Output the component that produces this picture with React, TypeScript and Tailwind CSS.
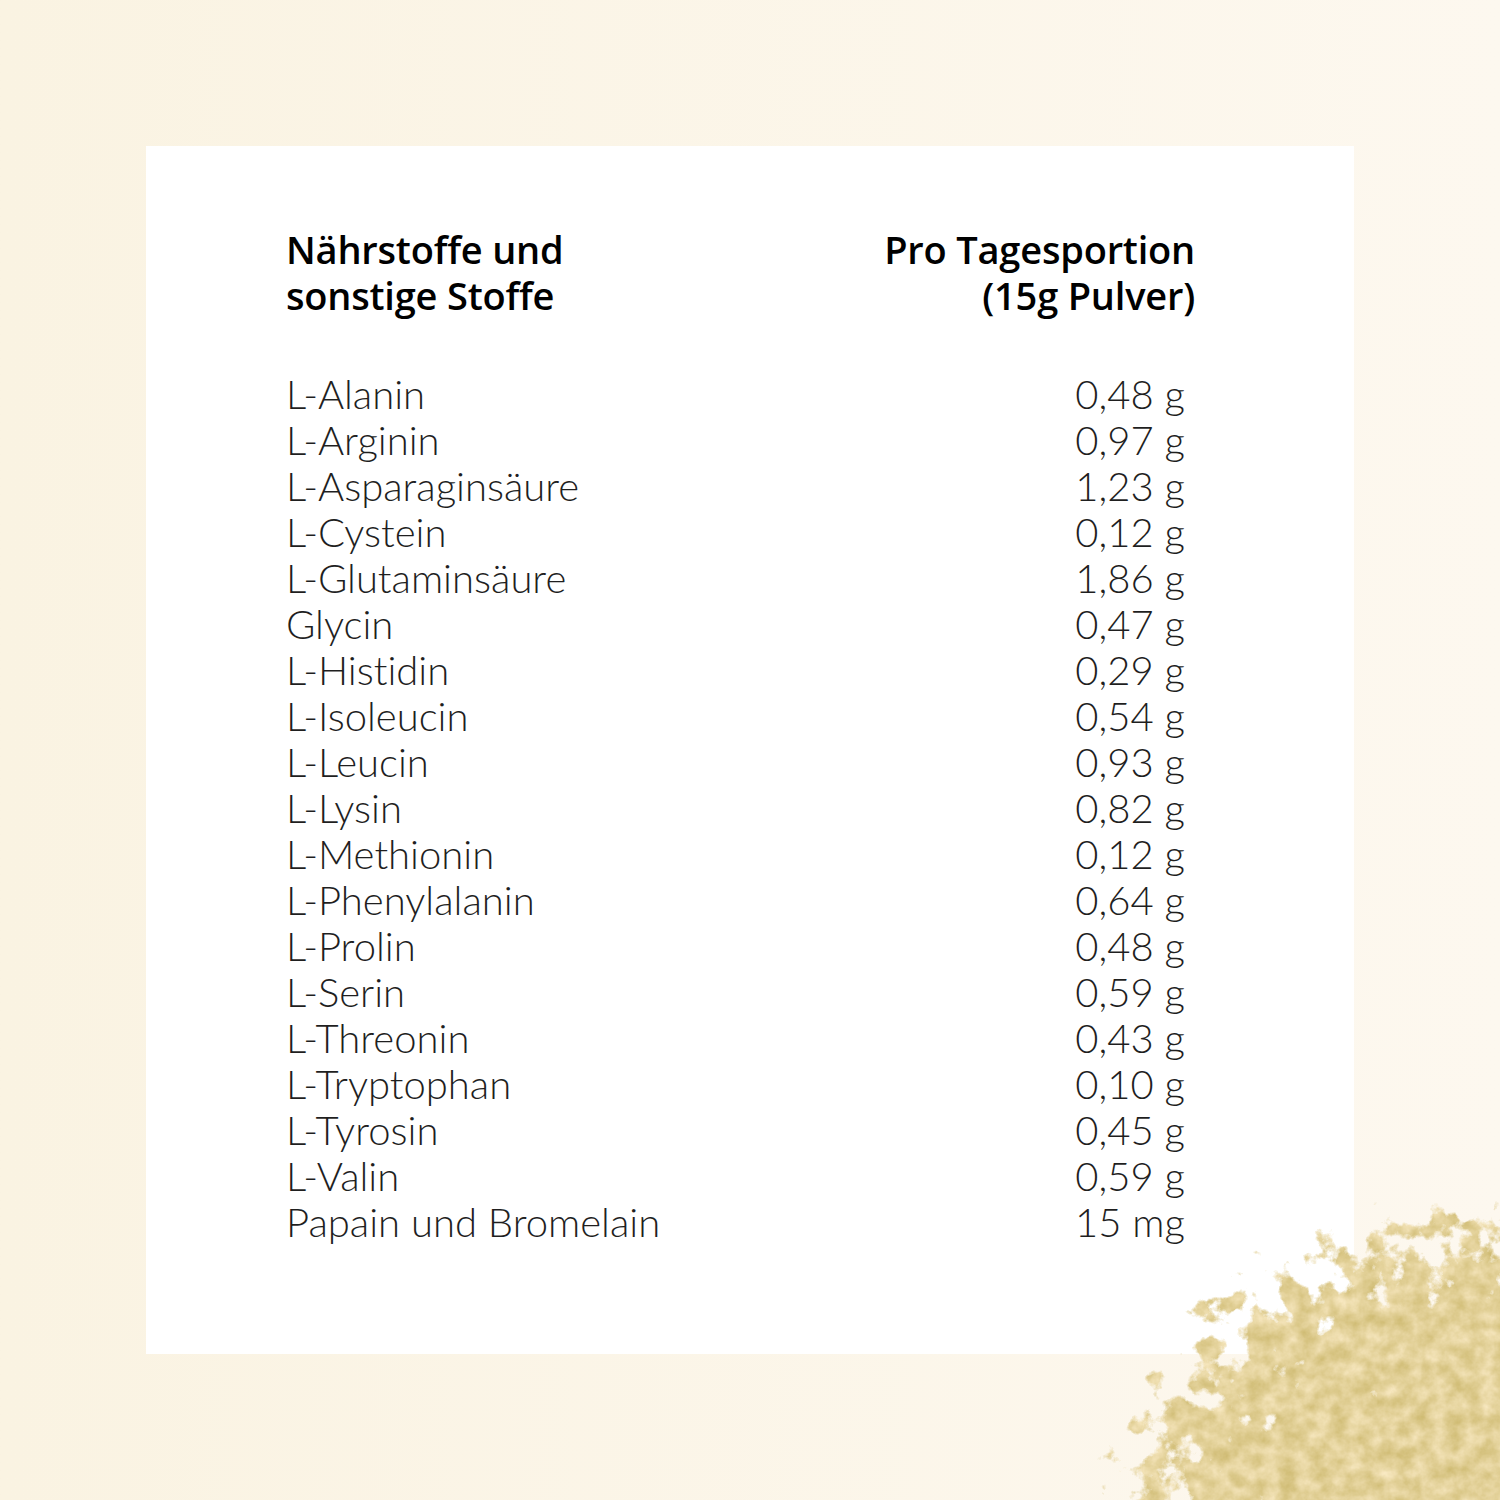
import React from 'react';

const ROWS: [string, string][] = [
  ['L-Alanin', '0,48 g'],
  ['L-Arginin', '0,97 g'],
  ['L-Asparaginsäure', '1,23 g'],
  ['L-Cystein', '0,12 g'],
  ['L-Glutaminsäure', '1,86 g'],
  ['Glycin', '0,47 g'],
  ['L-Histidin', '0,29 g'],
  ['L-Isoleucin', '0,54 g'],
  ['L-Leucin', '0,93 g'],
  ['L-Lysin', '0,82 g'],
  ['L-Methionin', '0,12 g'],
  ['L-Phenylalanin', '0,64 g'],
  ['L-Prolin', '0,48 g'],
  ['L-Serin', '0,59 g'],
  ['L-Threonin', '0,43 g'],
  ['L-Tryptophan', '0,10 g'],
  ['L-Tyrosin', '0,45 g'],
  ['L-Valin', '0,59 g'],
  ['Papain und Bromelain', '15 mg'],
];

// powder pile in the corner: noise thresholded against a radial falloff
const Powder = () => (
  <svg className="absolute right-0 bottom-0" width={420} height={320} viewBox="0 0 420 320">
    <defs>
      <radialGradient id="fall" cx="1" cy="1" r="1">
        <stop offset="0" stopColor="#fff" stopOpacity={1} />
        <stop offset="0.5" stopColor="#fff" stopOpacity={0.92} />
        <stop offset="0.75" stopColor="#fff" stopOpacity={0.62} />
        <stop offset="0.9" stopColor="#fff" stopOpacity={0.4} />
        <stop offset="0.97" stopColor="#fff" stopOpacity={0.24} />
        <stop offset="1" stopColor="#fff" stopOpacity={0.08} />
      </radialGradient>
      <filter id="pw" x="0" y="0" width="100%" height="100%" colorInterpolationFilters="sRGB">
        <feTurbulence type="fractalNoise" baseFrequency="0.035" numOctaves={5} seed={5} result="n" />
        <feColorMatrix in="n" type="matrix" values="0 0 0 0 0  0 0 0 0 0  0 0 0 0 0  1 0 0 0 0" result="na" />
        <feComposite in="SourceGraphic" in2="na" operator="arithmetic" k1={0} k2={1} k3={1} k4={-0.96} result="sum" />
        <feComponentTransfer in="sum" result="mask">
          <feFuncA type="linear" slope={9} intercept={0} />
        </feComponentTransfer>
        <feTurbulence type="fractalNoise" baseFrequency="0.06" numOctaves={4} seed={11} result="n2" />
        <feColorMatrix
          in="n2"
          type="matrix"
          values="0.2 0 0 0 0.79  0.22 0 0 0 0.71  0.38 0 0 0 0.41  0 0 0 0 1"
          result="tex"
        />
        <feComposite in="tex" in2="mask" operator="in" />
      </filter>
    </defs>
    <rect width={420} height={320} fill="url(#fall)" filter="url(#pw)" />
  </svg>
);

export default function App() {
  return (
    <div className="relative w-[1500px] h-[1500px] overflow-hidden bg-gradient-to-r from-[#faf3e2] to-[#fdf8ef] flex items-center justify-center">
      <div className="w-[1208px] h-[1208px] bg-white pl-[140px] pr-[159px] pt-[80px] text-black">
        <div className="grid grid-cols-2 text-[38px] leading-[46px] font-semibold tracking-[-0.2px]" style={{ fontFamily: '"Open Sans", "Noto Sans", sans-serif' }}>
          <div>
            Nährstoffe und
            <br />
            sonstige Stoffe
          </div>
          <div className="text-right">
            Pro Tagesportion
            <br />
            (15g Pulver)
          </div>
        </div>
        <div className="mt-[53px] pr-[10px] text-[40px] leading-[46px] font-light text-[#1f1f1f] [font-variant-ligatures:none]" style={{ fontFamily: '"Lato", "Noto Sans", sans-serif' }}>
          {ROWS.map(([name, val]) => (
            <div key={name} className="flex justify-between">
              <span>{name}</span>
              <span>{val}</span>
            </div>
          ))}
        </div>
      </div>
      <Powder />
    </div>
  );
}
